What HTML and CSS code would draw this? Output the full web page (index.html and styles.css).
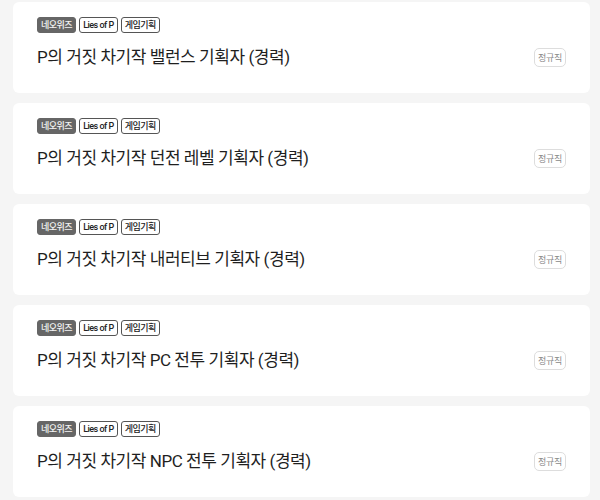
FILE: index.html
```html
<!DOCTYPE html>
<html lang="ko">
<head>
<meta charset="utf-8">
<link rel="stylesheet" href="styles.css">
</head>
<body>
<div class="list">
  <div class="card">
    <div class="tags"><span class="tag dark">네오위즈</span><span class="tag">Lies of P</span><span class="tag">게임기획</span></div>
    <div class="row"><h2 class="title">P의 거짓 차기작 밸런스 기획자 (경력)</h2><span class="badge">정규직</span></div>
  </div>
  <div class="card">
    <div class="tags"><span class="tag dark">네오위즈</span><span class="tag">Lies of P</span><span class="tag">게임기획</span></div>
    <div class="row"><h2 class="title">P의 거짓 차기작 던전 레벨 기획자 (경력)</h2><span class="badge">정규직</span></div>
  </div>
  <div class="card">
    <div class="tags"><span class="tag dark">네오위즈</span><span class="tag">Lies of P</span><span class="tag">게임기획</span></div>
    <div class="row"><h2 class="title">P의 거짓 차기작 내러티브 기획자 (경력)</h2><span class="badge">정규직</span></div>
  </div>
  <div class="card">
    <div class="tags"><span class="tag dark">네오위즈</span><span class="tag">Lies of P</span><span class="tag">게임기획</span></div>
    <div class="row"><h2 class="title">P의 거짓 차기작 PC 전투 기획자 (경력)</h2><span class="badge">정규직</span></div>
  </div>
  <div class="card">
    <div class="tags"><span class="tag dark">네오위즈</span><span class="tag">Lies of P</span><span class="tag">게임기획</span></div>
    <div class="row"><h2 class="title">P의 거짓 차기작 NPC 전투 기획자 (경력)</h2><span class="badge">정규직</span></div>
  </div>
</div>
</body>
</html>
```
FILE: styles.css
```css
html, body {
  margin: 0;
  padding: 0;
  background: #f5f5f5;
  font-family: Roboto, "Noto Sans CJK KR", sans-serif;
  color: #222;
}
.list {
  display: flex;
  flex-direction: column;
  gap: 10px;
  padding: 2px 10px 0 13px;
}
.card {
  background: #fff;
  border-radius: 6px;
  height: 91px;
  box-sizing: border-box;
  padding: 15px 24px 0 24px;
}
.tags {
  display: flex;
  gap: 3px;
}
.tag {
  display: inline-flex;
  align-items: center;
  height: 16px;
  box-sizing: border-box;
  padding: 0 3px;
  border: 1px solid #555;
  border-radius: 3px;
  font-size: 9px;
  font-weight: 500;
  letter-spacing: -0.5px;
  color: #222;
  line-height: 1;
}
.tag.dark {
  background: #666;
  border-color: #666;
  color: #f4f4f4;
}
.row {
  display: flex;
  align-items: center;
  justify-content: space-between;
  margin-top: 11px;
}
.title {
  margin: 0;
  font-size: 17px;
  font-weight: 400;
  line-height: 26px;
  letter-spacing: -0.45px;
  color: #1f1f1f;
}
.badge {
  display: inline-flex;
  align-items: center;
  justify-content: center;
  height: 19px;
  box-sizing: border-box;
  padding: 0 3px;
  border: 1px solid #ddd;
  border-radius: 5px;
  font-size: 9px;
  letter-spacing: -0.3px;
  color: #888;
}
```
